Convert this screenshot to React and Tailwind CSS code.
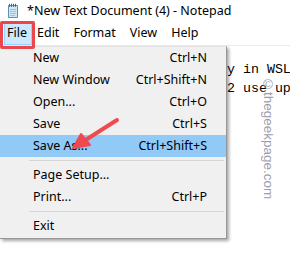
import React from "react";

const items = [
  { label: "New", key: "Ctrl+N" },
  { label: "New Window", key: "Ctrl+Shift+N" },
  { label: "Open...", key: "Ctrl+O" },
  { label: "Save", key: "Ctrl+S" },
  { label: "Save As...", key: "Ctrl+Shift+S", active: true },
  "sep",
  { label: "Page Setup...", key: "" },
  { label: "Print...", key: "Ctrl+P" },
  "sep",
  { label: "Exit", key: "" },
];

function NotepadIcon() {
  return (
    <svg width="15" height="16" viewBox="0 0 15 16">
      <path d="M2.5 2.5h9v12h-9z" fill="#cfe7f7" stroke="#5d8fb6" />
      <path d="M4 6.5h6M4 8.5h6M4 10.5h6M4 12.5h5" stroke="#9ec3de" />
      {[3.5, 5.5, 7.5, 9.5].map((x) => (
        <path key={x} d={`M${x} 0.8v3`} stroke="#3f5f7a" strokeWidth="1" />
      ))}
    </svg>
  );
}

export default function App() {
  return (
    <div className="relative w-[290px] h-[270px] overflow-hidden bg-white font-['Noto_Sans',sans-serif] text-black">
      {/* title */}
      <div className="flex items-center h-[22px] pl-[6px] gap-[6px]">
        <NotepadIcon />
        <span className="text-[12.5px] leading-none">*New Text Document (4) - Notepad</span>
      </div>

      {/* menu bar */}
      <div className="flex items-center h-[24px] pl-[4px] text-[12.5px] border-b border-[#ececec]">
        <div className="flex items-center h-[22px] w-[28px] pl-[2px] bg-[#cce8ff] border border-[#99d1ff]">File</div>
        <span className="ml-[5px]">Edit</span>
        <span className="ml-[14px]">Format</span>
        <span className="ml-[14px]">View</span>
        <span className="ml-[14px]">Help</span>
      </div>

      {/* editor */}
      <div className="pt-[14px] font-['Liberation_Mono',monospace] text-[13.3px] leading-[19px] pl-[227px] whitespace-nowrap">
        <div>y in WSL</div>
        <div>2 use up</div>
      </div>

      {/* watermark */}
      <span className="absolute left-[261px] top-[77px] [writing-mode:vertical-rl] text-[13.5px] text-[#9c9cae] font-['Liberation_Sans',sans-serif] leading-none">
        ©thegeekpage.com
      </span>

      {/* dropdown */}
      <div className="absolute left-0 top-[46px] w-[227px] bg-[#f0f0f0] border-t border-[#e3e3e3] border-r border-b border-r-[#979797] border-b-[#979797] shadow-[2px_2px_3px_rgba(0,0,0,0.35)] text-[12.5px] pb-[1px]">
        {items.map((it, i) =>
          it === "sep" ? (
            <div key={i} className="h-[7px] flex items-center pl-[29px] pr-[2px]">
              <div className="h-[1px] w-full bg-[#d5d5d5]" />
            </div>
          ) : (
            <div
              key={i}
              className={`flex items-center justify-between h-[22px] pl-[33px] pr-[19px] ${it.active ? "bg-[#91c9f7]" : ""}`}
            >
              <span>{it.label}</span>
              <span>{it.key}</span>
            </div>
          )
        )}
      </div>

      {/* red box around File */}
      <div className="absolute left-0 top-[21px] w-[35px] h-[28px] border-[3px] border-[#e9474c] rounded-[2px]" />

      {/* arrow */}
      <svg className="absolute left-0 top-0" width="290" height="270">
        <path d="M117 120 L84 141" stroke="#ef4a50" strokeWidth="4" strokeLinecap="round" />
        <path d="M73 148 L81 134 L90 145 Z" fill="#ef4a50" stroke="#ef4a50" strokeWidth="2" strokeLinejoin="round" />
      </svg>
    </div>
  );
}
